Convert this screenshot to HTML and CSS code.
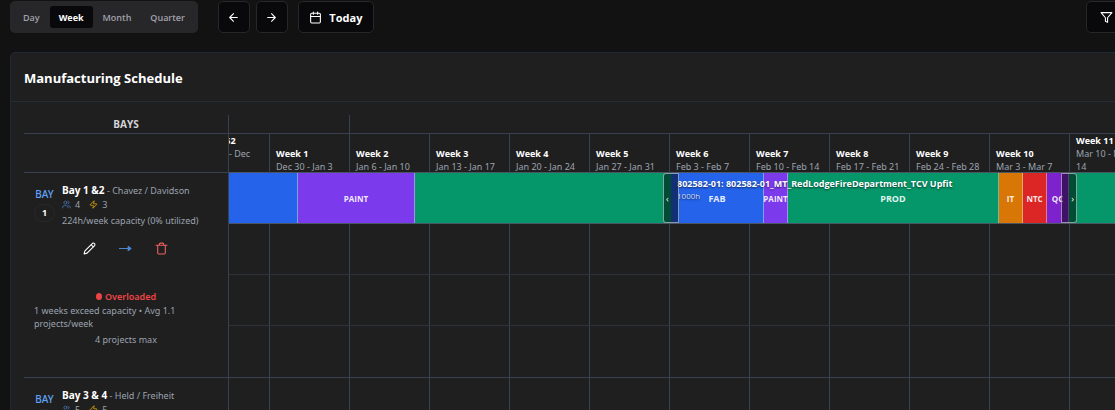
FILE: index.html
```html
<!DOCTYPE html>
<html lang="en">
<head>
<meta charset="utf-8">
<title>Manufacturing Schedule</title>
<link rel="stylesheet" href="styles.css">
</head>
<body>
<svg class="sprite" aria-hidden="true">
  <symbol id="users" viewBox="0 0 24 24"><path d="M16 21v-2a4 4 0 0 0-4-4H6a4 4 0 0 0-4 4v2M22 21v-2a4 4 0 0 0-3-3.87M16 3.13a4 4 0 0 1 0 7.75"/><circle cx="9" cy="7" r="4"/></symbol>
  <symbol id="zap" viewBox="0 0 24 24"><path d="M4 14a1 1 0 0 1-.78-1.63l9.9-10.2a.5.5 0 0 1 .86.46l-1.92 6.02A1 1 0 0 0 13 10h7a1 1 0 0 1 .78 1.63l-9.9 10.2a.5.5 0 0 1-.86-.46l1.92-6.02A1 1 0 0 0 11 14z"/></symbol>
</svg>
<main class="page">
  <div class="toolbar">
    <div class="tabs">
      <button class="tab">Day</button>
      <button class="tab tab-active">Week</button>
      <button class="tab">Month</button>
      <button class="tab">Quarter</button>
    </div>
    <div class="nav">
      <button class="btn" aria-label="Previous"><svg class="icon" viewBox="0 0 24 24"><path d="m12 19-7-7 7-7M19 12H5"/></svg></button>
      <button class="btn" aria-label="Next"><svg class="icon" viewBox="0 0 24 24"><path d="M5 12h14M12 5l7 7-7 7"/></svg></button>
    </div>
    <button class="btn btn-today"><svg class="icon" viewBox="0 0 24 24"><rect x="3" y="4" width="18" height="18" rx="2"/><path d="M8 2v4M16 2v4M3 10h18"/></svg>Today</button>
    <button class="btn btn-filter" aria-label="Filter"><svg class="icon" viewBox="0 0 24 24"><path d="M22 3H2l8 9.46V19l4 2v-8.54z"/></svg></button>
  </div>

  <section class="card">
    <header class="card-head"><h1 class="card-title">Manufacturing Schedule</h1></header>
    <div class="schedule">
      <div class="bays">
        <div class="bays-head">BAYS</div>
        <div class="bays-sub"></div>
        <article class="bay">
          <div class="bay-top">
            <div class="bay-id"><span class="bay-word">BAY</span><span class="bay-num">1</span></div>
            <div class="bay-info">
              <div class="bay-line"><strong class="bay-name">Bay 1 &amp;2</strong> - Chavez / Davidson</div>
              <div class="stats"><span class="stat"><svg class="mini users"><use href="#users"/></svg>4</span><span class="stat"><svg class="mini zap"><use href="#zap"/></svg>3</span></div>
              <div class="capacity">224h/week capacity (0% utilized)</div>
            </div>
          </div>
          <div class="actions">
            <button class="action" aria-label="Edit"><svg class="act-icon" viewBox="0 0 24 24"><path d="M17 3a2.85 2.83 0 1 1 4 4L7.500 20.500 2 22l1.500-5.500zM15 5l4 4"/></svg></button>
            <button class="action action-move" aria-label="Move"><svg class="act-icon" viewBox="0 0 24 24"><path d="M0 12h22M17 8l5 4-5 4z" fill="currentColor"/></svg></button>
            <button class="action action-delete" aria-label="Delete"><svg class="act-icon" viewBox="0 0 24 24"><path d="M2 6h20M19 6v14a2 2 0 0 1-2 2H7a2 2 0 0 1-2-2V6M8 6V4a2 2 0 0 1 2-2h4a2 2 0 0 1 2 2v2"/></svg></button>
          </div>
          <div class="load">
            <div class="overload"><span class="dot"></span>Overloaded</div>
            <p class="load-text">1 weeks exceed capacity • Avg 1.1 projects/week</p>
            <div class="load-max">4 projects max</div>
          </div>
        </article>
        <article class="bay">
          <div class="bay-top">
            <div class="bay-id"><span class="bay-word">BAY</span><span class="bay-num">2</span></div>
            <div class="bay-info">
              <div class="bay-line"><strong class="bay-name">Bay 3 &amp; 4</strong> - Held / Freiheit</div>
              <div class="stats"><span class="stat"><svg class="mini users"><use href="#users"/></svg>5</span><span class="stat"><svg class="mini zap"><use href="#zap"/></svg>5</span></div>
            </div>
          </div>
        </article>
      </div>

      <div class="timeline">
        <div class="months"><div class="month month-prev"></div><div class="month"></div></div>
        <div class="weeks">
          <div class="week"><b>Week 52</b><span>Dec 23 - Dec<br>27</span></div>
          <div class="week"><b>Week 1</b><span>Dec 30 - Jan 3</span></div>
          <div class="week"><b>Week 2</b><span>Jan 6 - Jan 10</span></div>
          <div class="week"><b>Week 3</b><span>Jan 13 - Jan 17</span></div>
          <div class="week"><b>Week 4</b><span>Jan 20 - Jan 24</span></div>
          <div class="week"><b>Week 5</b><span>Jan 27 - Jan 31</span></div>
          <div class="week"><b>Week 6</b><span>Feb 3 - Feb 7</span></div>
          <div class="week"><b>Week 7</b><span>Feb 10 - Feb 14</span></div>
          <div class="week"><b>Week 8</b><span>Feb 17 - Feb 21</span></div>
          <div class="week"><b>Week 9</b><span>Feb 24 - Feb 28</span></div>
          <div class="week"><b>Week 10</b><span>Mar 3 - Mar 7</span></div>
          <div class="week"><b>Week 11</b><span>Mar 10 - Mar<br>14</span></div>
        </div>
        <div class="rows">
          <div class="row">
            <div class="lane lane-bars">
              <div class="bar">
                <div class="seg fab" style="width:69px"></div>
                <div class="seg paint" style="width:117px">PAINT</div>
                <div class="seg prod" style="width:256px"></div>
              </div>
              <div class="bar bar-main">
                <div class="seg fab big" style="width:93px">FAB</div>
                <div class="seg paint" style="width:24px">PAINT</div>
                <div class="seg prod big" style="width:211px">PROD</div>
                <div class="seg it" style="width:24px">IT</div>
                <div class="seg ntc" style="width:24px">NTC</div>
                <div class="seg qc" style="width:22px">QC</div>
                <div class="bar-label"><span class="bar-name">802582-01: 802582-01_MT_RedLodgeFireDepartment_TCV Upfit</span><span class="bar-hours">1000h</span></div>
                <span class="handle handle-left">‹</span>
                <span class="handle handle-right">›</span>
              </div>
              <div class="bar bar-rest"><div class="seg prod"></div></div>
            </div>
            <div class="lane"></div>
            <div class="lane"></div>
            <div class="lane"></div>
          </div>
          <div class="row"></div>
        </div>
      </div>
    </div>
  </section>
</main>
</body>
</html>
```
FILE: styles.css
```css
* { box-sizing: border-box; }
html { height: 100%; }
body {
  margin: 0;
  height: 100%;
  overflow: hidden;
  background: #121212;
  color: #fff;
  font-family: "Segoe UI", "Open Sans", "Noto Sans", sans-serif;
  font-size: 9px;
  line-height: 13px;
}
button { font: inherit; color: inherit; border: 0; background: none; padding: 0; }
svg { fill: none; stroke: currentColor; stroke-width: 2; stroke-linecap: round; stroke-linejoin: round; }
.sprite { display: none; }
.page { width: calc(100% + 16px); padding: 1px 0 0 10px; }

.toolbar { display: flex; align-items: center; height: 32px; }
.tabs { display: flex; gap: 1px; height: 32px; padding: 5px 4px; background: #27272a; border-radius: 5px; }
.tab { padding: 0 9px; border-radius: 3px; color: #a1a1aa; font-weight: 600; }
.tab-active { background: #09090b; color: #fff; font-weight: 700; }
.nav { display: flex; gap: 6px; margin: 0 10px 0 20px; }
.btn {
  display: flex; align-items: center; justify-content: center; gap: 7px;
  width: 32px; height: 32px;
  background: #09090b; border: 1px solid #27272a; border-radius: 5px;
}
.icon { width: 13px; height: 13px; }
.btn-today { width: 76px; font-size: 11px; font-weight: 700; }
.btn-filter { width: 45px; margin-left: auto; padding-right: 4px; }

.card { margin-top: 19px; background: #1f1f1f; border: 1px solid #1f2937; border-radius: 5px 0 0 0; }
.card-head { padding: 15px 13px 13px; border-bottom: 1px solid #252c36; }
.card-title { margin: 0; font-size: 13px; line-height: 20px; font-weight: 700; }
.schedule { display: grid; grid-template-columns: 204px minmax(0, 1fr); padding: 13px 0 0 13px; }

.bays-head { height: 19px; border-bottom: 1px solid #374151; text-align: center; font-size: 10px; line-height: 18px; font-weight: 700; color: #d4d4d8; }
.bays-sub { height: 39px; border-bottom: 1px solid #374151; }
.bay { height: 205px; padding: 11px 10px 0; border-bottom: 1px solid #374151; color: #9ca3af; font-family: "Noto Sans", sans-serif; }
.bay-top { display: flex; gap: 7px; }
.bay-id { display: flex; flex-direction: column; align-items: center; width: 21px; padding-top: 4px; gap: 3px; }
.bay-word { color: #60a5fa; font-size: 10px; font-weight: 500; }
.bay-num { width: 21px; height: 18px; border: 1px solid #2a2a2d; border-radius: 9px; color: #fff; text-align: center; line-height: 16px; font-weight: 700; }
.bay-name { color: #fff; font-family: "Open Sans", sans-serif; font-size: 10px; font-weight: 700; }
.stats { display: flex; gap: 9px; padding-top: 1px; }
.stat { display: flex; align-items: center; gap: 4px; }
.mini { width: 9px; height: 9px; }
.users { color: #4a79b8; }
.zap { color: #eab308; }
.capacity { padding-top: 3px; white-space: nowrap; }
.actions { display: flex; justify-content: center; gap: 23px; padding: 15px 2px 0 0; }
.action { display: flex; width: 13px; height: 13px; color: #fff; }
.act-icon { width: 13px; height: 13px; }
.action-move { color: #4b86d0; }
.action-delete { color: #f06060; }
.load { padding-top: 35px; }
.overload { display: flex; align-items: center; justify-content: center; gap: 3px; color: #ef4444; font-weight: 600; }
.dot { width: 6px; height: 7px; border-radius: 50%; background: #ef4444; }
.load-text { margin: 1px 0 3px; }
.load-max { text-align: center; }

.timeline { overflow: hidden; border-left: 1px solid #374151; }
.months { display: flex; height: 19px; border-bottom: 1px solid #374151; }
.month-prev { width: 121px; border-right: 1px solid #374151; }
.weeks { display: flex; height: 39px; margin-left: -40px; border-bottom: 1px solid #4b5563; }
.week { display: flex; flex: 0 0 80px; flex-direction: column; justify-content: flex-end; height: 39px; padding-left: 6px; border-right: 1px solid #374151; }
.week:first-child { flex-basis: 81px; padding-left: 9px; }
.week b { font-weight: 700; }
.week span { color: #9ca3af; font-family: "Noto Sans", sans-serif; white-space: nowrap; }
.rows { background: repeating-linear-gradient(to right, transparent 0 79px, #374151 79px 80px) -39px 0; }
.row { height: 205px; border-bottom: 1px solid #374151; }
.lane { height: 51px; border-bottom: 1px solid #2d323b; }
.lane:last-child { border-bottom: 0; }
.lane-bars { display: flex; border-bottom-color: #4b5563; }
.bar { position: relative; display: flex; flex: none; }
.bar-main { z-index: 1; }
.bar-rest { flex: 1; }
.bar-rest .seg { flex: 1; }
.seg { display: flex; align-items: center; justify-content: center; white-space: nowrap; border-right: 1px solid #ffffff66; color: #ffffffe6; font-size: 8px; font-weight: 700; }
.bar .seg:last-of-type { border-right: 0; }
.seg.big { font-size: 9px; }
.fab { background: #2563eb; }
.paint { background: #7c3aed; }
.prod { background: #059669; }
.it { background: #d97706; }
.ntc { background: #dc2626; }
.qc { background: #7e22ce; }
.bar-label { position: absolute; left: 6px; top: 4px; display: flex; flex-direction: column; white-space: nowrap; text-shadow: 0 1px 2px #0009; }
.bar-name { font-weight: 700; }
.bar-hours { font-size: 8px; line-height: 12px; color: #ffffffcc; }
.handle { position: absolute; top: 0; bottom: 0; display: flex; align-items: center; width: 16px; padding: 0 2px; background: #00000080; border: 1px solid #ffffff80; color: #fff; }
.handle-left { left: -8px; border-radius: 3px 0 0 3px; }
.handle-right { right: -8px; justify-content: flex-end; border-radius: 0 3px 3px 0; }
```
